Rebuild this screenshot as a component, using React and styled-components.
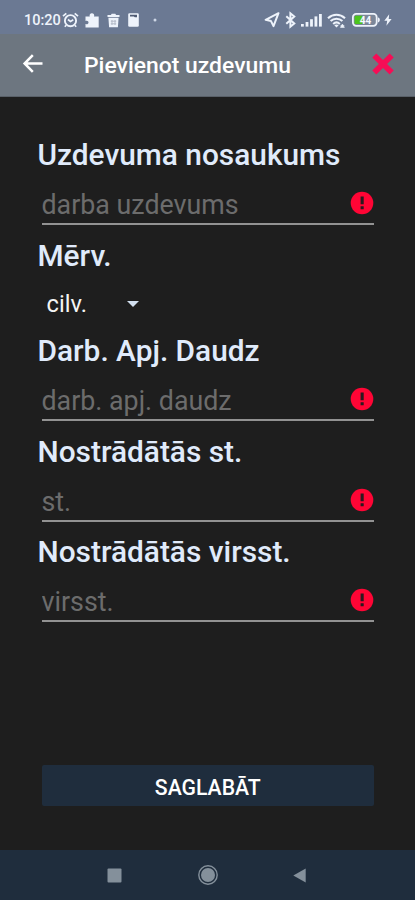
import React from 'react';
import styled, { createGlobalStyle } from 'styled-components';

const GlobalStyle = createGlobalStyle`
  * {
    box-sizing: border-box;
  }

  body {
    margin: 0;
    background-color: #1e1e1e;
    font-family: Roboto, 'Liberation Sans', sans-serif;
  }
`;

const Screen = styled.div`
  display: flex;
  flex-direction: column;
  width: 415px;
  height: 900px;
  overflow: hidden;
  background-color: #1e1e1e;
`;

const StatusBar = styled.header`
  display: flex;
  align-items: center;
  justify-content: space-between;
  height: 34px;
  padding: 6px 23px 0 24px;
  background-color: #6b7993;
  color: #eef3fb;
`;

const StatusGroup = styled.div`
  display: flex;
  align-items: center;
  gap: ${({ $gap }) => $gap || 0}px;
`;

const Clock = styled.span`
  width: 38px;
  padding-top: 1px;
  font-size: 14.5px;
  line-height: 20px;
  font-weight: 500;
  white-space: nowrap;
`;

const Glyph = styled.svg`
  display: block;
  flex: none;
  overflow: visible;
  margin-left: ${({ $left }) => $left || 0}px;
`;

const Toolbar = styled.div`
  display: flex;
  align-items: center;
  height: 63px;
  padding: 0 20px 0 23px;
  background-color: #6d7680;
  border-bottom: 1px solid #596068;
`;

const Title = styled.h1`
  flex: 1;
  margin: 0 0 0 41px;
  padding-top: 1px;
  font-size: 22.9px;
  line-height: 30px;
  font-weight: 500;
  color: #fff;
  white-space: nowrap;
`;

const IconButton = styled.button`
  display: flex;
  padding: 0 0 3px;
  border: none;
  background: none;
`;

const Form = styled.form`
  display: flex;
  flex-direction: column;
  flex: 1;
  padding: 38px 41px 44px 37.5px;
`;

const Field = styled.div`
  height: ${({ $height }) => $height || 100.5}px;
`;

const Label = styled.label`
  display: block;
  font-size: 29.85px;
  line-height: 40px;
  font-weight: 500;
  color: #e0ebfb;
  white-space: nowrap;
`;

const InputRow = styled.div`
  display: flex;
  align-items: center;
  height: 50px;
  margin-left: 4px;
  padding-top: 8px;
  border-bottom: 2px solid #929292;
`;

const Input = styled.input`
  flex: 1;
  min-width: 0;
  height: 40px;
  padding: 4px 0 0;
  border: none;
  outline: none;
  background: none;
  color: #fff;
  font-family: inherit;
  font-size: 26.8px;

  &::placeholder {
    color: #6c6c6c;
    opacity: 1;
  }
`;

const Select = styled.div`
  display: flex;
  align-items: center;
  justify-content: space-between;
  width: 92px;
  height: 56px;
  margin-left: 9px;
  font-size: 23.7px;
  color: #f4f4f4;
`;

const SaveButton = styled.button`
  height: 41px;
  margin: auto 0 0 4px;
  padding: 3px 0 0;
  border: none;
  border-radius: 2px;
  background-color: #1f2d3d;
  color: #fff;
  font-family: inherit;
  font-size: 21.2px;
  font-weight: 500;
`;

const NavBar = styled.nav`
  display: flex;
  align-items: center;
  height: 50px;
  padding-left: 107px;
  background-color: #1f2d3d;
`;

const AlarmIcon = () => (
  <Glyph width="17" height="16" viewBox="0 0 17 16" fill="none" stroke="currentColor">
    <circle cx="8.5" cy="8.7" r="5.6" strokeWidth="1.9" />
    <path d="M1 4.2 4.3 1.3M16 4.2l-3.3-2.9M4.2 13.2l-1.4 1.6M12.8 13.2l1.4 1.6" strokeWidth="1.7" />
    <path d="m5.9 7.5 2.6 2 2.8-1.7" strokeWidth="1.6" />
  </Glyph>
);

const PuzzleIcon = () => (
  <Glyph $left={1} width="14" height="15" viewBox="0 0 14 15" fill="currentColor">
    <path d="M.5 3.5h4.3C4.1 1.6 5.2.2 6.9.2s2.9 1.4 2.1 3.3h4.7v11H.5v-3.4c1.8.5 3-.4 3-1.7S2.3 7.2.5 7.9z" />
  </Glyph>
);

const TrashIcon = () => (
  <Glyph $left={3} width="13" height="15" viewBox="0 0 13 15">
    <path d="M.5 2h3.4l.8-1.2h3.6L9.1 2h3.4v1.9H.5zM1.4 4.8h10.2l-.7 9.4H2.1z" fill="currentColor" />
    <path d="M5 7v5M8 7v5M3.8 8.2h5.4M3.8 10.8h5.4" stroke="#b3b9c6" strokeWidth="1" />
  </Glyph>
);

const CalculatorIcon = () => (
  <Glyph $left={3} width="11" height="14" viewBox="0 0 11 14">
    <rect x=".2" y=".2" width="10.6" height="13.6" rx="1.3" fill="currentColor" />
    <path d="M2 1.7h7v2.6H6.8L5.9 3.5H2z" fill="#4e5a72" />
  </Glyph>
);

const DotIcon = () => (
  <Glyph $left={9} width="4" height="4" viewBox="0 0 4 4">
    <circle cx="2" cy="2" r="1.5" fill="#cdd6e6" />
  </Glyph>
);

const LocationIcon = () => (
  <Glyph width="16" height="16" viewBox="0 0 16 16">
    <path d="M14.5 1.2 1.6 7.8l5.3 1.1 2.6 5.2z" fill="none" stroke="currentColor" strokeWidth="2" strokeLinejoin="round" />
  </Glyph>
);

const BluetoothIcon = () => (
  <Glyph $left={5} width="11" height="16" viewBox="0 0 11 16">
    <path d="m1.3 4.2 8 7.2-3.9 3.3V1.3l3.9 3.3-8 7.2" fill="none" stroke="currentColor" strokeWidth="2" />
  </Glyph>
);

const SignalIcon = () => (
  <Glyph $left={5} width="21" height="14" viewBox="0 0 21 14" fill="currentColor">
    <rect x="0" y="11" width="2.8" height="2.6" />
    <rect x="4.6" y="9" width="2.8" height="4.6" />
    <rect x="9.1" y="6.2" width="2.8" height="7.4" />
    <rect x="13.5" y="3.4" width="2.8" height="10.2" />
    <rect x="18" y="1" width="2.8" height="12.6" />
  </Glyph>
);

const WifiIcon = () => (
  <Glyph $left={5} width="19" height="15" viewBox="0 0 19 15">
    <path d="M1 5.2c5-4.6 12-4.6 17 0M3.6 8.1c3.4-3.2 8.4-3.2 11.8 0M6.2 10.9c2-1.9 4.6-1.9 6.6 0" fill="none" stroke="currentColor" strokeWidth="2.1" />
    <path d="M7.3 12.2q2.2-1.6 4.4 0L9.5 14.5z" fill="currentColor" />
    <path d="M13.4 12.6h4M15.4 11l2 3.4h-4z" fill="currentColor" stroke="currentColor" strokeWidth=".6" />
  </Glyph>
);

const BatteryIcon = () => (
  <Glyph $left={6} width="28" height="14" viewBox="0 0 28 14">
    <rect x=".9" y=".9" width="23.8" height="12" rx="3.3" fill="#7c8799" stroke="currentColor" strokeWidth="1.8" />
    <path d="M3.6 2.8h7v8.2h-7a1 1 0 0 1-1-1V3.8a1 1 0 0 1 1-1z" fill="#4cc51c" />
    <path d="M26 4.6c2.4.4 2.4 4.4 0 4.8z" fill="currentColor" />
    <text x="13.6" y="10.6" textAnchor="middle" fontSize="10" fontWeight="700" fill="#f5f8ff">
      44
    </text>
  </Glyph>
);

const BoltIcon = () => (
  <Glyph $left={4} width="8" height="12" viewBox="0 0 8 12">
    <path d="M5.2.2.3 6.8h2.9L2.4 11.8 7.6 5H4.7z" fill="currentColor" />
  </Glyph>
);

const BackIcon = () => (
  <Glyph width="20" height="19" viewBox="0 0 20 19">
    <path d="M19.5 9.5H2M9.8 1.2 1.6 9.5l8.2 8.3" fill="none" stroke="#fff" strokeWidth="2.5" />
  </Glyph>
);

const CloseIcon = () => (
  <Glyph width="24" height="24" viewBox="0 0 24 24">
    <path
      d="m5.3 1.6 6.7 6.5 6.7-6.5 4 3.9-6.6 6.5 6.6 6.5-4 3.9-6.7-6.5-6.7 6.5-4-3.9L7.9 12 1.3 5.5z"
      fill="#f60d56"
    />
  </Glyph>
);

const ErrorIcon = () => (
  <Glyph width="24" height="24" viewBox="0 0 24 24">
    <circle cx="12" cy="12" r="11.3" fill="#ff0535" />
    <path d="M10.6 5.4h3.1v7.8h-3.1zM10.6 15.2h3.1v3h-3.1z" fill="#291a1f" />
  </Glyph>
);

const CaretIcon = () => (
  <Glyph width="12" height="6" viewBox="0 0 12 6">
    <path d="M0 0h12L6 6z" fill="#d2dfef" />
  </Glyph>
);

const RecentsIcon = () => (
  <Glyph width="15" height="15" viewBox="0 0 15 15">
    <rect x=".5" y=".5" width="14" height="14" rx="1" fill="#84909b" />
  </Glyph>
);

const HomeIcon = () => (
  <Glyph $left={76} width="20" height="20" viewBox="0 0 20 20">
    <circle cx="10" cy="10" r="9.2" fill="none" stroke="#84909b" strokeWidth="1.4" />
    <circle cx="10" cy="10" r="7" fill="#84909b" />
  </Glyph>
);

const NavBackIcon = () => (
  <Glyph $left={75} width="13" height="15" viewBox="0 0 13 15">
    <path d="M12.7.5v14L.3 7.5z" fill="#84909b" />
  </Glyph>
);

const TextField = ({ id, label, placeholder }) => (
  <Field>
    <Label htmlFor={id}>{label}</Label>
    <InputRow>
      <Input id={id} placeholder={placeholder} />
      <ErrorIcon />
    </InputRow>
  </Field>
);

export default function App() {
  return (
    <React.Fragment>
      <GlobalStyle />
      <Screen>
        <StatusBar>
          <StatusGroup>
            <Clock>10:20</Clock>
            <StatusGroup $gap={5}>
              <AlarmIcon />
              <PuzzleIcon />
              <TrashIcon />
              <CalculatorIcon />
              <DotIcon />
            </StatusGroup>
          </StatusGroup>
          <StatusGroup>
            <LocationIcon />
            <BluetoothIcon />
            <SignalIcon />
            <WifiIcon />
            <BatteryIcon />
            <BoltIcon />
          </StatusGroup>
        </StatusBar>
        <Toolbar>
          <IconButton aria-label="Atpakaļ">
            <BackIcon />
          </IconButton>
          <Title>Pievienot uzdevumu</Title>
          <IconButton aria-label="Aizvērt">
            <CloseIcon />
          </IconButton>
        </Toolbar>
        <Form>
          <TextField id="name" label="Uzdevuma nosaukums" placeholder="darba uzdevums" />
          <Field $height={95.8}>
            <Label>Mērv.</Label>
            <Select>
              <span>cilv.</span>
              <CaretIcon />
            </Select>
          </Field>
          <TextField id="amount" label="Darb. Apj. Daudz" placeholder="darb. apj. daudz" />
          <TextField id="hours" label="Nostrādātās st." placeholder="st." />
          <TextField id="overtime" label="Nostrādātās virsst." placeholder="virsst." />
          <SaveButton type="button">SAGLABĀT</SaveButton>
        </Form>
        <NavBar>
          <RecentsIcon />
          <HomeIcon />
          <NavBackIcon />
        </NavBar>
      </Screen>
    </React.Fragment>
  );
}
